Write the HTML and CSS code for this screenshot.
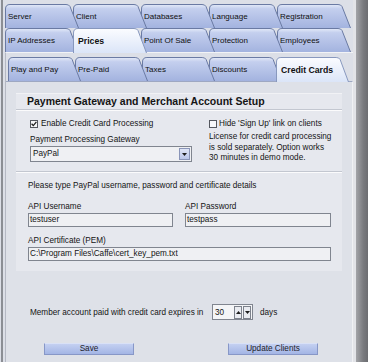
FILE: index.html
```html
<!DOCTYPE html>
<html lang="en">
<head>
    <meta charset="UTF-8">
    <meta name="viewport" content="width=device-width, initial-scale=1.0">
    <title>Credit Cards</title>
    <link rel="stylesheet" href="styles.css">
</head>
<body>
    <div class="window">
        <div class="main">
            <div class="tabrow row1">
                <div class="tab">Server</div>
                <div class="tab">Client</div>
                <div class="tab">Databases</div>
                <div class="tab">Language</div>
                <div class="tab">Registration</div>
            </div>
            <div class="tabrow row2">
                <div class="tab">IP Addresses</div>
                <div class="tab selected">Prices</div>
                <div class="tab">Point Of Sale</div>
                <div class="tab">Protection</div>
                <div class="tab">Employees</div>
            </div>

            <div class="inner">
                <div class="tabrow row3">
                    <div class="tab">Play and Pay</div>
                    <div class="tab">Pre-Paid</div>
                    <div class="tab">Taxes</div>
                    <div class="tab">Discounts</div>
                    <div class="tab selected">Credit Cards</div>
                </div>

                <div class="page">
                    <div class="panel">
                        <div class="panel-title">Payment Gateway and Merchant Account Setup</div>

                        <div class="gateway">
                            <div class="col-left">
                                <div class="check">
                                    <span class="box">
                                        <svg width="6" height="6" viewBox="0 0 6 6"><path d="M0.6 2.8 L2.3 4.6 L5.4 0.9" fill="none" stroke="#1d1d1d" stroke-width="1.3"/></svg>
                                    </span>
                                    Enable Credit Card Processing
                                </div>
                                <div class="label">Payment Processing Gateway</div>
                                <div class="select">
                                    <span class="select-value">PayPal</span>
                                    <span class="select-btn">
                                        <svg width="5" height="3" viewBox="0 0 5 3"><path d="M0 0 H5 L2.5 3 Z" fill="#1d1d1d"/></svg>
                                    </span>
                                </div>
                            </div>
                            <div class="col-right">
                                <div class="check"><span class="box"></span>Hide 'Sign Up' link on clients</div>
                                <p class="note">License for credit card processing<br>is sold separately. Option works<br>30 minutes in demo mode.</p>
                            </div>
                        </div>

                        <div class="credentials">
                            <div class="hint">Please type PayPal username, password and certificate details</div>
                            <div class="fields">
                                <div class="field">
                                    <div class="label">API Username</div>
                                    <div class="input">testuser</div>
                                </div>
                                <div class="field">
                                    <div class="label">API Password</div>
                                    <div class="input">testpass</div>
                                </div>
                                <div class="field wide">
                                    <div class="label">API Certificate (PEM)</div>
                                    <div class="input">C:\Program Files\Caffe\cert_key_pem.txt</div>
                                </div>
                            </div>
                        </div>
                    </div>

                    <div class="expiry">
                        <span class="expiry-text">Member account paid with credit card expires in</span>
                        <div class="spin">
                            <span class="spin-value">30</span>
                            <span class="spin-btn">
                                <svg width="5" height="3" viewBox="0 0 5 3"><path d="M0 3 H5 L2.5 0 Z" fill="#1d1d1d"/></svg>
                            </span>
                            <span class="spin-btn">
                                <svg width="5" height="3" viewBox="0 0 5 3"><path d="M0 0 H5 L2.5 3 Z" fill="#1d1d1d"/></svg>
                            </span>
                        </div>
                        <span class="days">days</span>
                    </div>

                    <div class="actions">
                        <button>Save</button>
                        <button>Update Clients</button>
                    </div>
                </div>
            </div>
        </div>
        <div class="edge"></div>
    </div>
</body>
</html>
```

FILE: styles.css
```css
body {
    margin: 0;
    background-color: #dcdfe7;
    font-family: "Liberation Sans", Arial, sans-serif;
    font-size: 8.2px;
    color: #141414;
    overflow: hidden;
}

.window {
    display: flex;
    width: 368px;
    height: 362px;
}

.main {
    flex: 1;
    margin-left: 1px;
    border-left: 2px solid #8b8e94;
    display: flex;
    flex-direction: column;
}

.edge {
    width: 12px;
    border-left: 3px solid #e2e3e7;
    background: linear-gradient(to right, #a3a4a8, #7a7b7f 60%, #6c6d71);
}

/* tabs */
.tabrow {
    display: flex;
    height: 24px;
}

.row1 {
    margin-top: 4px;
    padding-left: 2px;
}

.row2 {
    padding-left: 2px;
}

.row3 {
    padding-left: 2px;
}

.tab {
    position: relative;
    flex: none;
    width: 74px;
    height: 24px;
    margin-right: -6px;
    padding: 1px 0 0 3px;
    box-sizing: border-box;
    line-height: 23px;
    font-size: 8px;
    color: #101010;
    white-space: nowrap;
    background: url("data:image/svg+xml;utf8,<svg xmlns='http://www.w3.org/2000/svg' viewBox='0 0 74 24' preserveAspectRatio='none'><defs><linearGradient id='g' x1='0' y1='0' x2='0' y2='1'><stop offset='0' stop-color='%23e4eaf8'/><stop offset='0.18' stop-color='%23c4cfee'/><stop offset='1' stop-color='%23a3b3df'/></linearGradient></defs><path d='M0.5 24V5Q0.5 0.5 5 0.5H61Q64 0.5 65 2.5L73.5 24' fill='url(%23g)' stroke='%236a7aa3'/></svg>") no-repeat;
    background-size: 100% 100%;
}

.row3 .tab {
    width: 73px;
}

.tab:nth-child(1) { z-index: 5; }
.tab:nth-child(2) { z-index: 4; }
.tab:nth-child(3) { z-index: 3; }
.tab:nth-child(4) { z-index: 2; }
.tab:nth-child(5) { z-index: 1; }

.tab.selected {
    z-index: 9;
    height: 25px;
    margin-bottom: -1px;
    padding-top: 2px;
    padding-left: 5px;
    font-weight: bold;
    font-size: 8.7px;
    line-height: 22px;
    background-image: url("data:image/svg+xml;utf8,<svg xmlns='http://www.w3.org/2000/svg' viewBox='0 0 74 25' preserveAspectRatio='none'><defs><linearGradient id='g' x1='0' y1='0' x2='0' y2='1'><stop offset='0' stop-color='%23fbfcff'/><stop offset='1' stop-color='%23dbe5f8'/></linearGradient></defs><path d='M0.5 25V5Q0.5 0.5 5 0.5H61Q64 0.5 65 2.5L73.5 25' fill='url(%23g)' stroke='%238797bd'/></svg>");
}

.inner {
    flex: 1;
    margin-left: 2px;
    padding-top: 4px;
    border-left: 1px solid #b5b9c4;
    border-top: 1px solid #f2f3f6;
    display: flex;
    flex-direction: column;
}

.page {
    flex: 1;
    border-top: 1px solid #9ea8c2;
    border-right: 1px solid #f0f1f4;
    background-color: #dee1e8;
}

/* panel */
.panel {
    width: 326px;
    margin: 11px 0 0 10px;
    padding-bottom: 10px;
    background-color: #e6e8ee;
    border-top: 1px solid #f1f2f5;
}

.panel-title {
    height: 15px;
    line-height: 15px;
    padding-left: 11px;
    font-size: 10.5px;
    font-weight: bold;
    color: #151515;
    border-bottom: 1px solid #c3c7d0;
}

.gateway {
    display: flex;
    gap: 17px;
    height: 60px;
    padding-left: 14px;
    border-top: 1px solid #fbfbfc;
    border-bottom: 1px solid #c3c7d0;
}

.col-left {
    width: 162px;
}

.check {
    display: flex;
    align-items: center;
    height: 11px;
    margin-top: 7px;
}

.box {
    width: 8px;
    height: 8px;
    margin-right: 3px;
    box-sizing: border-box;
    border: 1px solid #55585f;
    background: #f7f8fa;
    display: flex;
    align-items: center;
    justify-content: center;
}

.col-right .box {
    margin-right: 2px;
}

.label {
    height: 11px;
    line-height: 11px;
}

.col-left .label {
    margin-top: 5px;
}

.select {
    display: flex;
    height: 16px;
    margin-top: 1px;
    box-sizing: border-box;
    border: 1px solid #80858f;
    background: #eff0f3;
}

.select-value {
    flex: 1;
    padding-left: 2px;
    line-height: 14px;
}

.select-btn {
    width: 9px;
    margin: 1px;
    border: 1px solid #8a95b8;
    background: linear-gradient(#dfe5f6, #bac6ea);
    display: flex;
    align-items: center;
    justify-content: center;
}

.note {
    margin: 3px 0 0;
    line-height: 10.5px;
}

.credentials {
    padding: 7px 0 0 12px;
    border-top: 1px solid #fbfbfc;
}

.hint {
    height: 11px;
    line-height: 11px;
}

.fields {
    display: grid;
    grid-template-columns: 145px 146px;
    column-gap: 12px;
    row-gap: 8px;
    margin-top: 10px;
}

.field.wide {
    grid-column: 1 / 3;
}

.input {
    height: 14px;
    margin-top: 1px;
    padding-left: 1px;
    box-sizing: border-box;
    line-height: 12px;
    border: 1px solid #80858f;
    background: #eff0f3;
}

/* expiry */
.expiry {
    display: flex;
    align-items: center;
    height: 16px;
    margin: 33px 0 0 24px;
}

.expiry-text {
    width: 182px;
}

.spin {
    display: flex;
    align-items: center;
    width: 41px;
    height: 16px;
    box-sizing: border-box;
    border: 1px solid #80858f;
    background: #f4f5f7;
}

.spin-value {
    flex: 1;
    padding-left: 2px;
}

.spin-btn {
    width: 6px;
    height: 11px;
    margin-right: 1px;
    border: 1px solid #7d828c;
    background: #e9ebf0;
    display: flex;
    align-items: center;
    justify-content: center;
}

.days {
    margin-left: 7px;
}

.actions {
    display: flex;
    gap: 94px;
    margin: 23px 0 0 38px;
}

button {
    width: 90px;
    height: 12px;
    padding: 0;
    border: 1px solid #8797c7;
    border-top-color: #d9e1f6;
    background: linear-gradient(#c4d0f1, #a3b5e5);
    font-family: "Liberation Sans", Arial, sans-serif;
    font-size: 8.2px;
    line-height: 10px;
    color: #1d1d2b;
}
```
